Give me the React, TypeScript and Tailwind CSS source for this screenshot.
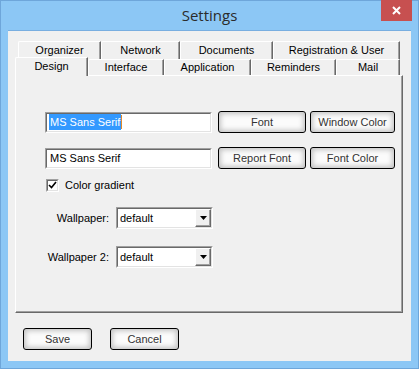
import React from "react";

const ui = "font-['Liberation_Sans',Arial,sans-serif] text-[11px] text-black";

function Tab({ label, w, selected }: { label: string; w: number; selected?: boolean }) {
  return (
    <div
      style={{ width: w }}
      className={`flex items-center justify-center bg-[#f0f0f0] border-l border-t border-l-white border-t-white border-r border-r-[#696969] shadow-[inset_-1px_0_#a0a0a0] rounded-tl-[2px] ${
        selected ? "relative z-10 h-[19px] -mb-px pb-[2px]" : "h-full"
      }`}
    >
      {label}
    </div>
  );
}

function Btn({ label, w }: { label: string; w: number }) {
  return (
    <div
      style={{ width: w }}
      className="h-[22px] flex items-center justify-center rounded-[3px] border border-black bg-[#fbfbfb] shadow-[inset_0_0_5px_2px_#c4c4c4] text-[#333]"
    >
      {label}
    </div>
  );
}

function Sunken({ className, children }: { className?: string; children?: React.ReactNode }) {
  return (
    <div
      className={`border border-t-[#a0a0a0] border-l-[#a0a0a0] border-b-white border-r-white ${className ?? ""}`}
    >
      <div className="h-full border border-t-[#696969] border-l-[#696969] border-b-[#e3e3e3] border-r-[#e3e3e3] bg-white flex items-center">
        {children}
      </div>
    </div>
  );
}

function Combo({ value }: { value: string }) {
  return (
    <Sunken className="w-[97px] h-[22px]">
      <span className="flex-1 pl-[2px]">{value}</span>
      <div className="w-[16px] h-full border border-t-white border-l-white border-b-[#696969] border-r-[#696969] bg-[#f0f0f0] flex items-center justify-center shadow-[inset_-1px_-1px_#a0a0a0]">
        <svg width="7" height="4" viewBox="0 0 7 4">
          <path d="M0 0h7L3.5 4z" fill="#000" />
        </svg>
      </div>
    </Sunken>
  );
}

export default function App() {
  return (
    <div className="w-[419px] h-[369px] bg-[#8cc7f5] border border-[#6ea6da] flex flex-col">
      {/* title bar */}
      <div className="relative h-[29px] flex items-center justify-center font-['Open_Sans',sans-serif] text-[15px] text-[#2b2b2b]">
        Settings
        <div className="absolute right-[6px] -top-px w-[31px] h-[21px] bg-[#c75050] flex items-center justify-center">
          <svg width="9" height="9" viewBox="0 0 9 9">
            <path d="M1 1l7 7M8 1L1 8" stroke="#fff" strokeWidth="2" />
          </svg>
        </div>
      </div>

      {/* client area */}
      <div className={`mx-[7px] h-[331px] bg-[#f0f0f0] border-t border-[#78aee0] pl-[7px] pt-[10px] ${ui}`}>
        <div className="flex ml-[3px] h-[18px]">
          <Tab label="Organizer" w={83} />
          <Tab label="Network" w={79} />
          <Tab label="Documents" w={93} />
          <Tab label="Registration & User" w={127} />
        </div>
        <div className="flex items-end h-[16px]">
          <Tab label="Design" w={73} selected />
          <Tab label="Interface" w={76} />
          <Tab label="Application" w={87} />
          <Tab label="Reminders" w={85} />
          <Tab label="Mail" w={64} />
        </div>

        {/* tab page */}
        <div className="w-[388px] h-[238px] border-l border-t border-l-white border-t-white border-r border-b border-r-[#696969] border-b-[#696969] shadow-[inset_-1px_-1px_#a0a0a0] pl-[29px] pt-[35px]">
          <div className="flex items-center">
            <Sunken className="w-[167px] h-[21px]">
              <span className="ml-[2px] px-[1px] bg-[#3399ff] text-white">MS Sans Serif</span>
              <span className="w-px h-[14px] bg-[#e08a2c]" />
            </Sunken>
            <div className="ml-[6px]"><Btn label="Font" w={88} /></div>
            <div className="ml-[4px]"><Btn label="Window Color" w={85} /></div>
          </div>
          <div className="flex items-center mt-[14px]">
            <Sunken className="w-[167px] h-[21px]">
              <span className="ml-[3px]">MS Sans Serif</span>
            </Sunken>
            <div className="ml-[6px]"><Btn label="Report Font" w={88} /></div>
            <div className="ml-[4px]"><Btn label="Font Color" w={85} /></div>
          </div>
          <div className="flex items-center h-[13px] mt-[10px] ml-[1px]">
            <Sunken className="w-[13px] h-[13px]">
              <svg width="9" height="9" viewBox="0 0 9 9" className="mx-auto">
                <path d="M1 4l2.5 2.5L8 1" stroke="#000" strokeWidth="1.6" fill="none" />
              </svg>
            </Sunken>
            <span className="ml-[6px] leading-none">Color gradient</span>
          </div>
          <div className="flex items-center mt-[15px]">
            <span className="w-[64px] text-right">Wallpaper:</span>
            <div className="ml-[7px]"><Combo value="default" /></div>
          </div>
          <div className="flex items-center mt-[17px]">
            <span className="w-[64px] text-right">Wallpaper 2:</span>
            <div className="ml-[7px]"><Combo value="default" /></div>
          </div>
        </div>

        {/* footer buttons */}
        <div className="flex mt-[15px] ml-[8px] gap-[18px]">
          <Btn label="Save" w={69} />
          <Btn label="Cancel" w={69} />
        </div>
      </div>
    </div>
  );
}
